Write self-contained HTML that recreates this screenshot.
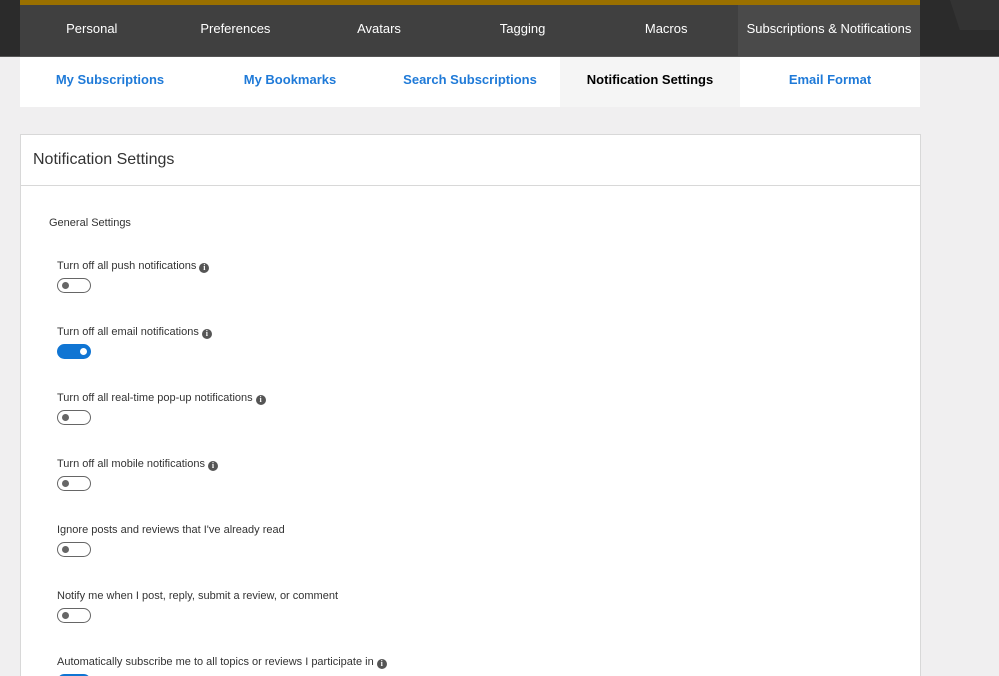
<!DOCTYPE html>
<html style="overflow:hidden;width:999px;height:676px"><head><style>
body{margin:0;width:999px;height:676px;overflow:hidden;background:#f0eff0;font-family:"Segoe UI","Liberation Sans",sans-serif;position:relative}
.top{position:absolute;left:0;top:0;width:999px;height:56px;background:#2b2b2b}
.gold{position:absolute;left:20px;top:0;width:900px;height:5px;background:#9a7000}
.nav{position:absolute;left:20px;top:5px;width:900px;height:51px;background:#404040;display:flex}
.nav div{width:143.6px;color:#fff;font-size:13px;text-align:center;line-height:48px}
.nav div.a{width:182px;background:#4a4a4a}
.shape{position:absolute;left:950px;top:0;width:49px;height:30px;background:#333;clip-path:polygon(0 0,100% 0,100% 100%,20% 100%)}
.line{position:absolute;left:0;top:56px;width:999px;height:1px;background:#555}
.sub{position:absolute;left:20px;top:57px;width:900px;height:50px;background:#fff;display:flex}
.sub div{width:180px;text-align:center;line-height:46px;font-size:13px;color:#1f7ad8;font-weight:600}
.sub div.a{background:#f5f5f5;color:#000;font-weight:bold}
.card{position:absolute;left:20px;top:134px;width:899px;height:542px;background:#fff;border:1px solid #d8d8d8;border-bottom:none;overflow:hidden}
.hd{height:50px;border-bottom:1px solid #d8d8d8;font-size:16px;color:#333;line-height:50px;padding-left:12px}
.gs{position:absolute;left:28px;top:82px;font-size:11px;color:#333}
.it{position:absolute;left:36px;font-size:11px;color:#333}
.i{display:inline-block;width:10px;height:10px;border-radius:50%;background:#555;color:#fff;font-size:8px;line-height:10px;text-align:center;font-weight:bold;vertical-align:-1px;margin-left:3px;font-family:"Liberation Serif",serif}
.tg{position:absolute;left:0;top:18px;width:32px;height:13px;border:1px solid #666;border-radius:8px;background:#fff}
.tg:after{content:"";position:absolute;left:4px;top:3px;width:7px;height:7px;border-radius:50%;background:#666}
.tg.on{background:#1075d3;border-color:#1075d3}
.tg.on:after{left:22px;background:#fff}
</style></head><body>
<div class="top"></div><div class="shape"></div><div class="gold"></div>
<div class="nav"><div>Personal</div><div>Preferences</div><div>Avatars</div><div>Tagging</div><div>Macros</div><div class="a">Subscriptions &amp; Notifications</div></div>
<div class="line"></div>
<div class="sub"><div>My Subscriptions</div><div>My Bookmarks</div><div>Search Subscriptions</div><div class="a">Notification Settings</div><div>Email Format</div></div>
<div class="card"><div class="hd">Notification Settings</div>
<div class="gs">General Settings</div>
<div class="it" style="top:125px">Turn off all push notifications<span class="i">i</span><div class="tg"></div></div>
<div class="it" style="top:191px">Turn off all email notifications<span class="i">i</span><div class="tg on"></div></div>
<div class="it" style="top:257px">Turn off all real-time pop-up notifications<span class="i">i</span><div class="tg"></div></div>
<div class="it" style="top:323px">Turn off all mobile notifications<span class="i">i</span><div class="tg"></div></div>
<div class="it" style="top:389px">Ignore posts and reviews that I've already read<div class="tg"></div></div>
<div class="it" style="top:455px">Notify me when I post, reply, submit a review, or comment<div class="tg"></div></div>
<div class="it" style="top:521px">Automatically subscribe me to all topics or reviews I participate in<span class="i">i</span><div class="tg on"></div></div>
</div>
</body></html>
